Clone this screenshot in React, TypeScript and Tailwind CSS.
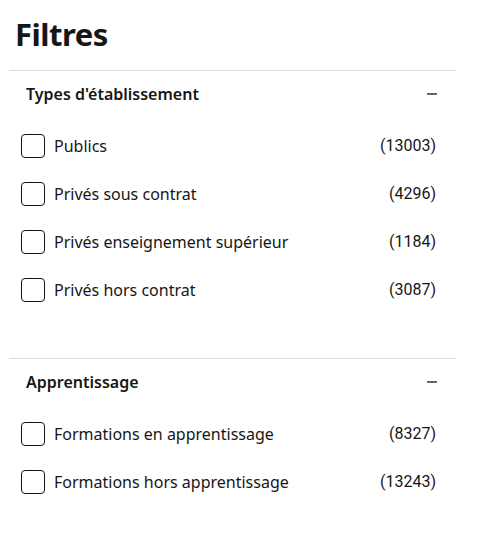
import React from "react";

type Item = { label: string; count: number };

const sections: { title: string; items: Item[] }[] = [
  {
    title: "Types d'établissement",
    items: [
      { label: "Publics", count: 13003 },
      { label: "Privés sous contrat", count: 4296 },
      { label: "Privés enseignement supérieur", count: 1184 },
      { label: "Privés hors contrat", count: 3087 },
    ],
  },
  {
    title: "Apprentissage",
    items: [
      { label: "Formations en apprentissage", count: 8327 },
      { label: "Formations hors apprentissage", count: 13243 },
    ],
  },
];

export default function App() {
  return (
    <div className="w-[483px] h-[544px] bg-white text-[#161616] overflow-hidden" style={{ fontFamily: '"Noto Sans", sans-serif' }}>
      <h1 className="pl-[15px] pt-[14px] h-[70px] text-[31px] leading-[40px] font-bold tracking-[-0.5px]">Filtres</h1>
      {sections.map((s) => (
        <section key={s.title} className="ml-[9px] w-[447px] border-t border-[#dddddd] pb-[44px]">
          <div className="h-[47px] pb-[2px] flex items-center justify-between pl-[17px] pr-[19px]">
            <span className="text-[16px] font-semibold leading-6">{s.title}</span>
            <span className="block w-[10px] h-[2px] bg-[#666666]" />
          </div>
          <ul className="mt-[4px]">
            {s.items.map((it) => (
              <li key={it.label} className="h-[48px] flex items-center pl-[12px] pr-[20px]">
                <span className="w-[24px] h-[24px] rounded-[4px] border border-[#161616] shrink-0" />
                <span className="ml-[9px] flex-1 text-[16px] leading-6">{it.label}</span>
                <span className="text-[16px] leading-6" style={{ fontFamily: "Roboto, sans-serif" }}>({it.count})</span>
              </li>
            ))}
          </ul>
        </section>
      ))}
    </div>
  );
}
